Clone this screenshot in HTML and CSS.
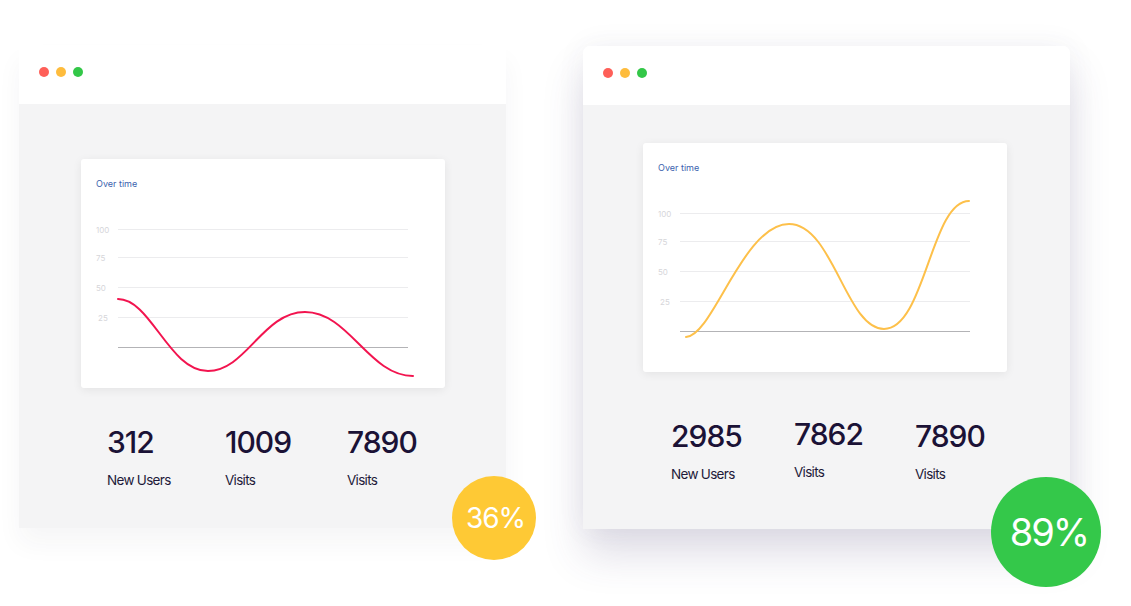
FILE: index.html
```html
<!DOCTYPE html>
<html lang="en">
<head>
<meta charset="utf-8">
<title>Stats</title>
<link rel="stylesheet" href="styles.css">
</head>
<body>
<div class="stage">
  <section class="window window-left">
    <header class="titlebar">
      <span class="dot dot-red"></span><span class="dot dot-yellow"></span><span class="dot dot-green"></span>
    </header>
    <div class="pane pane-left">
      <div class="card">
        <div class="card-title">Over time</div>
        <svg class="chart" width="364" height="198" viewBox="0 0 364 198">
          <g class="grid">
            <line x1="37" y1="39.5" x2="327" y2="39.5"/>
            <line x1="37" y1="67.5" x2="327" y2="67.5"/>
            <line x1="37" y1="97.5" x2="327" y2="97.5"/>
            <line x1="37" y1="127.5" x2="327" y2="127.5"/>
          </g>
          <line class="axis" x1="37" y1="157.5" x2="327" y2="157.5"/>
          <g class="labels">
            <text x="15" y="43">100</text>
            <text x="15" y="71">75</text>
            <text x="15" y="101">50</text>
            <text x="17" y="131">25</text>
          </g>
          <path class="line line-red" d="M37,109 C70,109 88,181 127,181 C165,181 182,122 224,122 C268,122 288,186 332,186"/>
        </svg>
      </div>
      <div class="stats">
        <div class="stat"><div class="num">312</div><div class="lbl">New Users</div></div>
        <div class="stat"><div class="num">1009</div><div class="lbl">Visits</div></div>
        <div class="stat"><div class="num">7890</div><div class="lbl">Visits</div></div>
      </div>
    </div>
    <div class="badge badge-yellow">36%</div>
  </section>

  <section class="window window-right">
    <header class="titlebar">
      <span class="dot dot-red"></span><span class="dot dot-yellow"></span><span class="dot dot-green"></span>
    </header>
    <div class="pane pane-right">
      <div class="card">
        <div class="card-title">Over time</div>
        <svg class="chart" width="364" height="198" viewBox="0 0 364 198">
          <g class="grid">
            <line x1="37" y1="39.5" x2="327" y2="39.5"/>
            <line x1="37" y1="67.5" x2="327" y2="67.5"/>
            <line x1="37" y1="97.5" x2="327" y2="97.5"/>
            <line x1="37" y1="127.5" x2="327" y2="127.5"/>
          </g>
          <line class="axis" x1="37" y1="157.5" x2="327" y2="157.5"/>
          <g class="labels">
            <text x="15" y="43">100</text>
            <text x="15" y="71">75</text>
            <text x="15" y="101">50</text>
            <text x="17" y="131">25</text>
          </g>
          <path class="line line-yellow" d="M43,163 C70,162 100,50 146,50 C190,50 203,155 241,155 C282,155 288,27 326,27"/>
        </svg>
      </div>
      <div class="stats">
        <div class="stat"><div class="num">2985</div><div class="lbl">New Users</div></div>
        <div class="stat stat-up"><div class="num">7862</div><div class="lbl">Visits</div></div>
        <div class="stat"><div class="num">7890</div><div class="lbl">Visits</div></div>
      </div>
    </div>
    <div class="badge badge-green">89%</div>
  </section>
</div>
</body>
</html>
```

FILE: styles.css
```css
html, body {
  margin: 0;
  padding: 0;
  background: #ffffff;
  font-family: "Inter", "Noto Sans", "Liberation Sans", sans-serif;
  min-height: 606px;
}

.stage {
  display: flex;
  align-items: flex-start;
  gap: 77px;
  padding: 45px 0 0 19px;
  min-height: 606px;
  box-sizing: border-box;
}

.window {
  position: relative;
  width: 487px;
  display: flex;
  flex-direction: column;
}

.window-left {
  box-shadow: 0 16px 24px rgba(40, 40, 60, 0.045);
}

.window-right {
  margin-top: 1px;
  border-radius: 7px 7px 0 0;
  box-shadow: 0 26px 40px rgba(70, 60, 110, 0.17), 0 0 30px rgba(70, 60, 110, 0.06);
}

.titlebar {
  height: 59px;
  box-sizing: border-box;
  padding: 22px 0 0 20px;
  display: flex;
  gap: 7px;
  background: #ffffff;
  border-radius: inherit;
}

.dot {
  width: 10px;
  height: 10px;
  border-radius: 50%;
}
.dot-red { background: #fe5f58; }
.dot-yellow { background: #febc3d; }
.dot-green { background: #33c748; }

.pane {
  height: 424px;
  box-sizing: border-box;
  background: #f4f4f5;
  padding-left: 62px;
}
.pane-left { padding-top: 55px; }
.pane-right { padding-top: 38px; padding-left: 60px; }

.card {
  width: 364px;
  height: 229px;
  box-sizing: border-box;
  background: #ffffff;
  border-radius: 3px;
  padding-top: 19px;
  box-shadow: 0 2px 10px rgba(0, 0, 0, 0.07);
}

.card-title {
  margin-left: 15px;
  font-size: 9px;
  line-height: 12px;
  color: #3a5fae;
}

.chart {
  display: block;
}

.grid line {
  stroke: #ececee;
  stroke-width: 1;
}

.axis {
  stroke: #b3b3b6;
  stroke-width: 1;
}

.labels text {
  font-family: "Inter", "Noto Sans", sans-serif;
  font-size: 8px;
  fill: #d6d6da;
}

.line {
  fill: none;
  stroke-width: 2;
  stroke-linecap: round;
}
.line-red { stroke: #f2144f; }
.line-yellow { stroke: #fdc04a; }

.stats {
  display: grid;
  grid-template-columns: 118px 122px auto;
  margin-left: 26px;
}
.pane-left .stats { margin-top: 36px; }
.pane-right .stats { margin-top: 46px; margin-left: 28px; grid-template-columns: 123px 121px auto; }

.stat-up { margin-top: -2px; }

.num {
  font-size: 30px;
  line-height: 36px;
  font-weight: 500;
  color: #1b1236;
  letter-spacing: -1px;
}

.lbl {
  margin-top: 11px;
  font-size: 13.5px;
  line-height: 18px;
  color: #1e1a3a;
  letter-spacing: -0.7px;
}

.badge {
  position: absolute;
  border-radius: 50%;
  display: flex;
  align-items: center;
  justify-content: center;
  color: #ffffff;
  font-weight: 400;
}

.badge-yellow {
  left: 433px;
  top: 431px;
  width: 84px;
  height: 84px;
  background: #fec935;
  font-size: 28px;
  letter-spacing: -1px;
  padding-left: 3px;
  box-sizing: border-box;
}

.badge-green {
  left: 408px;
  top: 431px;
  width: 110px;
  height: 110px;
  background: #34c84a;
  font-size: 38px;
  letter-spacing: -2px;
  padding-left: 6px;
  box-sizing: border-box;
}
```
